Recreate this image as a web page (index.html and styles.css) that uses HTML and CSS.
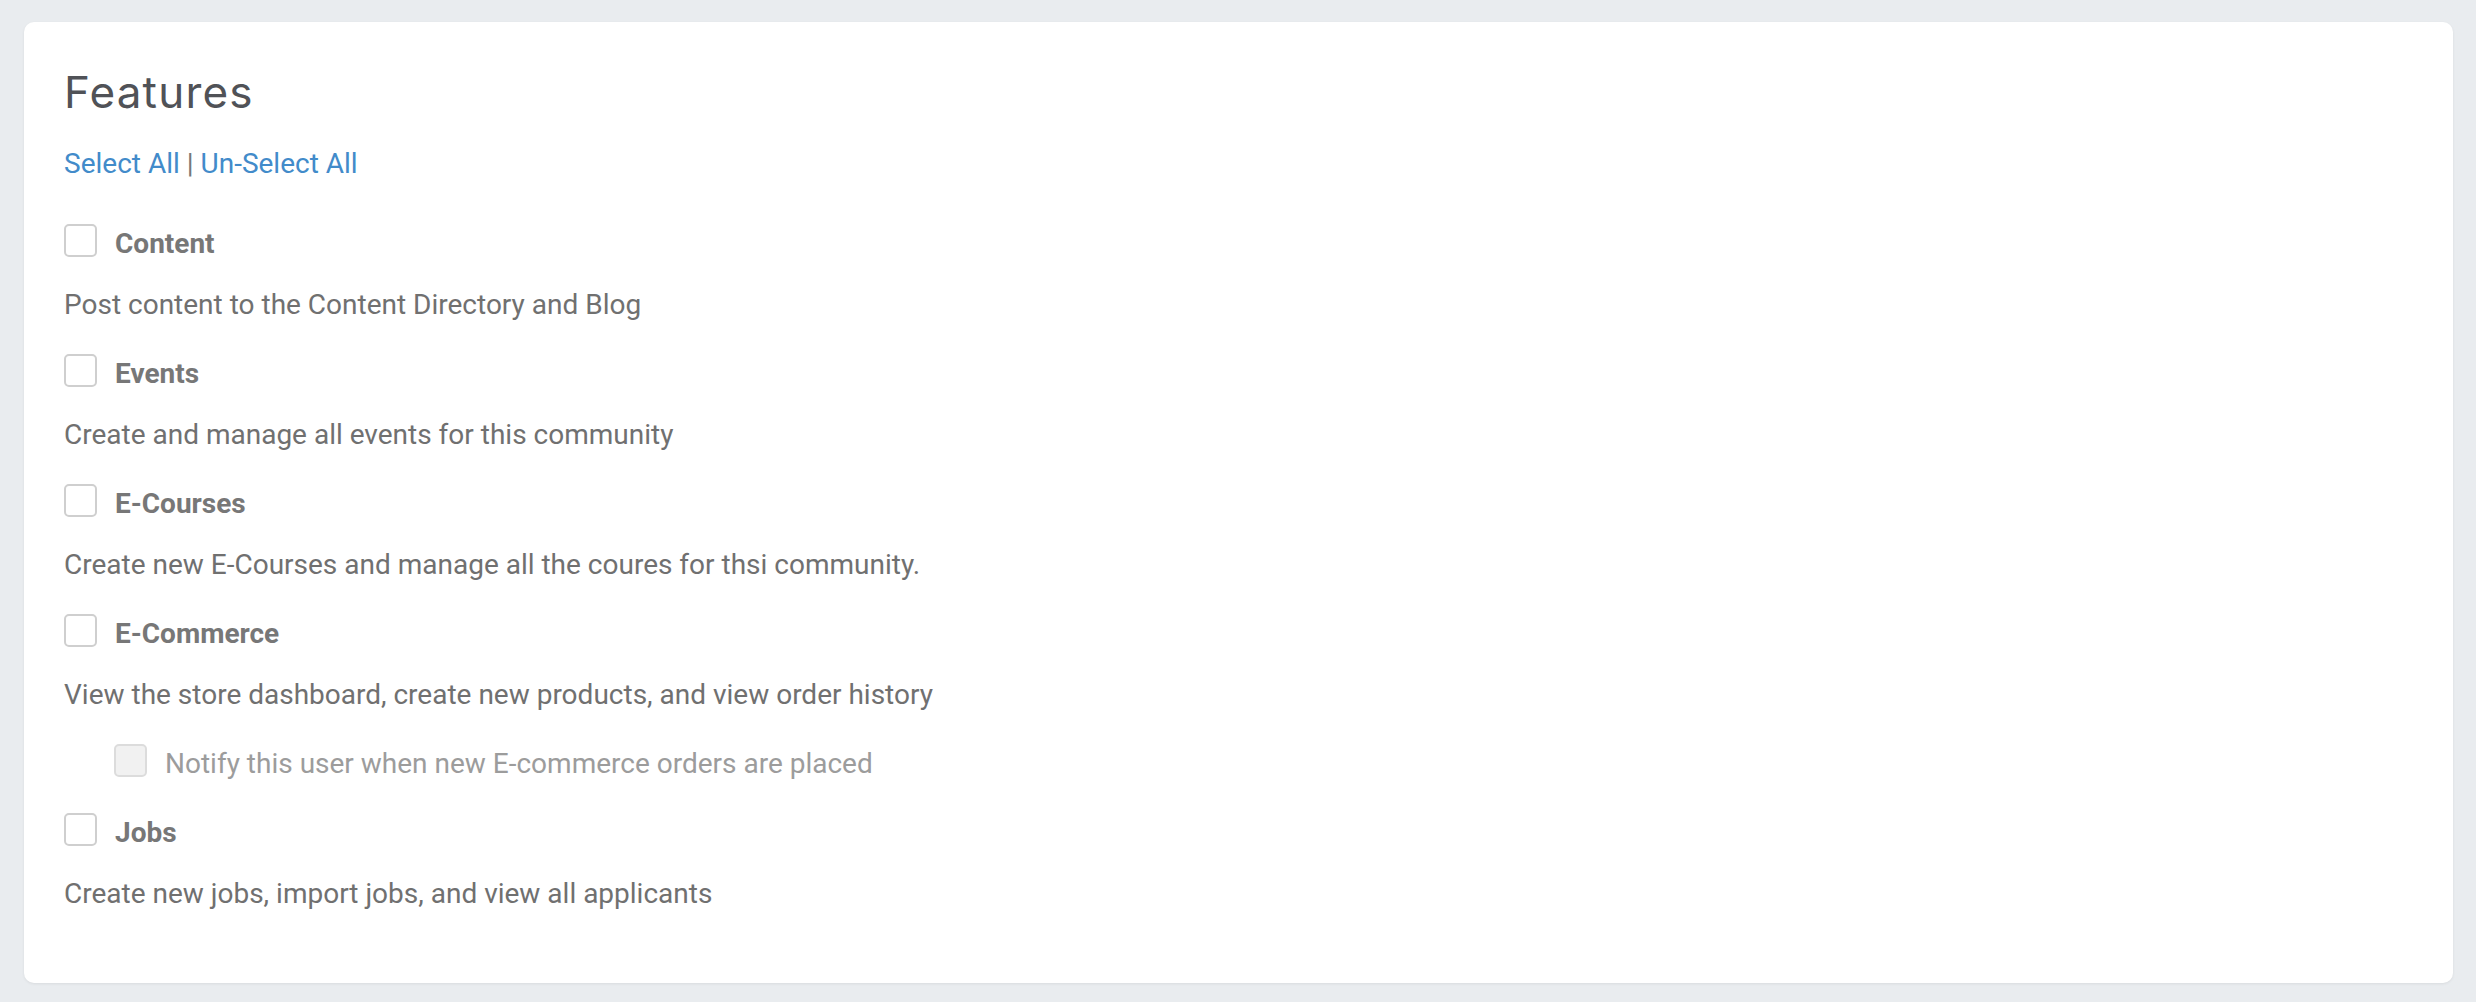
FILE: index.html
```html
<!DOCTYPE html>
<html lang="en">
<head>
<meta charset="utf-8">
<title>Features</title>
<link rel="stylesheet" href="styles.css">
</head>
<body>
<div class="card">
  <h2 class="title">Features</h2>
  <div class="bulk"><a href="#" class="link">Select All</a> <span class="sep">|</span> <a href="#" class="link">Un-Select All</a></div>

  <div class="feature">
    <label class="row"><span class="box"></span><span class="name">Content</span></label>
    <p class="desc">Post content to the Content Directory and Blog</p>
  </div>

  <div class="feature">
    <label class="row"><span class="box"></span><span class="name">Events</span></label>
    <p class="desc">Create and manage all events for this community</p>
  </div>

  <div class="feature">
    <label class="row"><span class="box"></span><span class="name">E-Courses</span></label>
    <p class="desc">Create new E-Courses and manage all the coures for thsi community.</p>
  </div>

  <div class="feature">
    <label class="row"><span class="box"></span><span class="name">E-Commerce</span></label>
    <p class="desc">View the store dashboard, create new products, and view order history</p>
    <label class="row sub"><span class="box disabled"></span><span class="subname">Notify this user when new E-commerce orders are placed</span></label>
  </div>

  <div class="feature">
    <label class="row"><span class="box"></span><span class="name">Jobs</span></label>
    <p class="desc">Create new jobs, import jobs, and view all applicants</p>
  </div>
</div>
</body>
</html>
```

FILE: styles.css
```css
html, body {
  margin: 0;
  padding: 0;
}
body {
  background: #e9ecef;
  padding: 22px 23px 20px 24px;
  font-family: Roboto, "Liberation Sans", Arial, sans-serif;
  font-size: 28px;
  line-height: 40px;
  color: #707070;
}
.card {
  background: #ffffff;
  border-radius: 10px;
  box-shadow: 0 1px 3px rgba(0, 0, 0, 0.07);
  padding: 46px 40px 40px 40px;
}
.title {
  margin: 0 0 28px 0;
  font-family: Inter, "Open Sans", sans-serif;
  font-weight: 400;
  font-size: 44px;
  line-height: 48px;
  letter-spacing: 1.2px;
  color: #505257;
}
.bulk {
  margin-bottom: 40px;
}
.link {
  color: #428bca;
  text-decoration: none;
}
.sep {
  color: #777;
}
.row {
  display: flex;
  align-items: flex-start;
  margin-bottom: 21px;
}
.box {
  flex: none;
  width: 29px;
  height: 29px;
  border: 2px solid #cfcfcf;
  border-radius: 5px;
  background: #fff;
  margin-right: 18px;
}
.box.disabled {
  background: #f1f1f1;
  border-color: #dcdcdc;
}
.name {
  font-weight: 700;
  color: #777777;
}
.desc {
  margin: 0 0 29px 0;
}
.row.sub {
  margin-left: 50px;
  margin-bottom: 29px;
  margin-top: 0;
}
.subname {
  color: #9c9c9c;
}
```
